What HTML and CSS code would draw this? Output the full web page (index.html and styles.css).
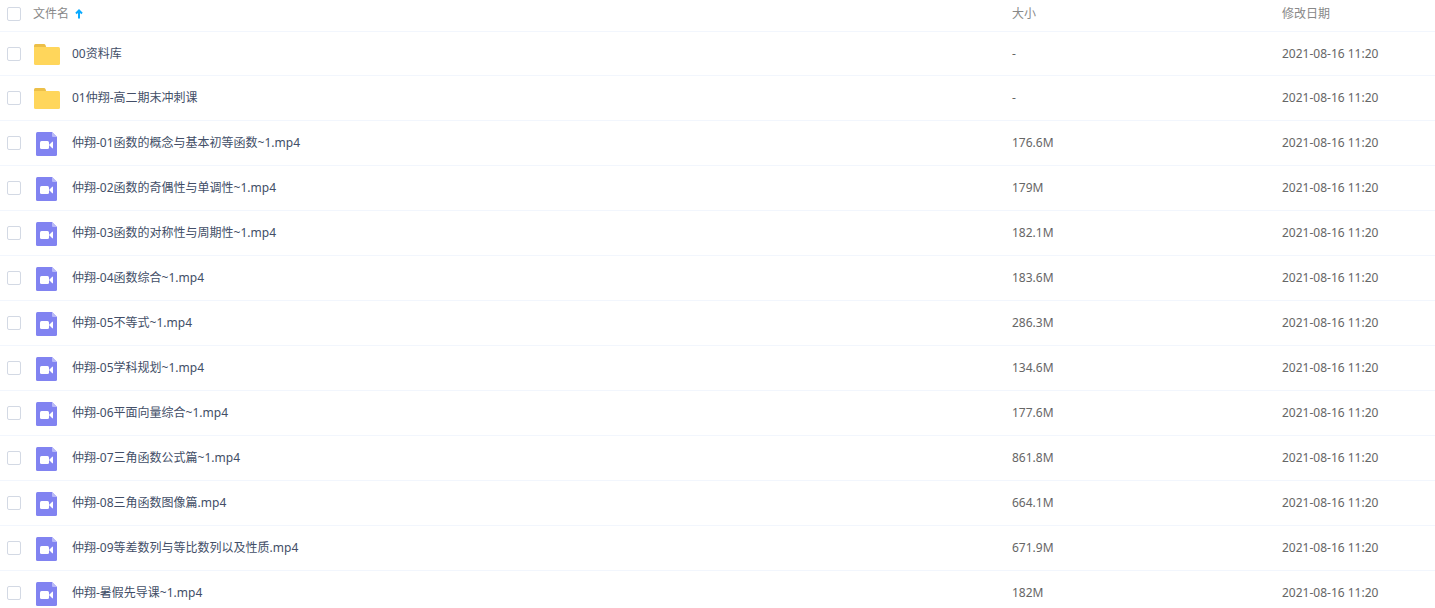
FILE: index.html
```html
<!doctype html>
<html lang="zh-CN">
  <head>
    <meta charset="utf-8">
    <meta name="viewport" content="width=device-width, initial-scale=1">
    <title>文件列表</title>
    <link rel="stylesheet" href="styles.css">
  </head>
  <body>
    <svg class="sprite" aria-hidden="true">
      <symbol id="folder" viewBox="0 0 26 26">
        <path fill="#ecbf48" d="M0 8V4.500Q0 3 1.500 3H10Q11 3 11.500 4L12.500 7V8z"/>
        <path fill="#ffd65b" d="M0 6H24.500Q26 6 26 7.500V22.500Q26 24 24.500 24H1.500Q0 24 0 22.500z"/>
      </symbol>
      <symbol id="video" viewBox="0 0 26 26">
        <path fill="#8183f1" d="M3.500 2H18L23 7V24.500Q23 26 21.500 26H3.500Q2 26 2 24.500V3.500Q2 2 3.500 2z"/>
        <path fill="#b9baf8" d="M18 2L23 7H19Q18 7 18 6z"/>
        <rect fill="#fff" x="6" y="11" width="9" height="8" rx="1.500"/>
        <path fill="#fff" d="M15.500 14.500L18 12Q19 11 19 12.500V17.500Q19 19 18 18L15.500 15.500z"/>
      </symbol>
    </svg>
    <table class="list">
      <thead>
        <tr>
          <th class="check"><input type="checkbox" aria-label="全选"></th>
          <th class="name">
            <button class="sort" type="button">文件名
              <svg class="arrow" viewBox="0 0 8 10" aria-hidden="true"><path d="M4 9.500V1.500M1 4.500L4 1.500L7 4.500"/></svg>
            </button>
          </th>
          <th class="size">大小</th>
          <th class="date">修改日期</th>
        </tr>
      </thead>
      <tbody>
        <tr>
          <td class="check"><input type="checkbox" aria-label="选择 00资料库"></td>
          <td class="name"><a class="file" href="#"><svg class="icon" aria-hidden="true"><use href="#folder"/></svg>00资料库</a></td>
          <td class="size">-</td>
          <td class="date">2021-08-16 11:20</td>
        </tr>
        <tr>
          <td class="check"><input type="checkbox" aria-label="选择 01仲翔-高二期末冲刺课"></td>
          <td class="name"><a class="file" href="#"><svg class="icon" aria-hidden="true"><use href="#folder"/></svg>01仲翔-高二期末冲刺课</a></td>
          <td class="size">-</td>
          <td class="date">2021-08-16 11:20</td>
        </tr>
        <tr>
          <td class="check"><input type="checkbox" aria-label="选择 仲翔-01函数的概念与基本初等函数~1.mp4"></td>
          <td class="name"><a class="file" href="#"><svg class="icon" aria-hidden="true"><use href="#video"/></svg>仲翔-01函数的概念与基本初等函数~1.mp4</a></td>
          <td class="size">176.6M</td>
          <td class="date">2021-08-16 11:20</td>
        </tr>
        <tr>
          <td class="check"><input type="checkbox" aria-label="选择 仲翔-02函数的奇偶性与单调性~1.mp4"></td>
          <td class="name"><a class="file" href="#"><svg class="icon" aria-hidden="true"><use href="#video"/></svg>仲翔-02函数的奇偶性与单调性~1.mp4</a></td>
          <td class="size">179M</td>
          <td class="date">2021-08-16 11:20</td>
        </tr>
        <tr>
          <td class="check"><input type="checkbox" aria-label="选择 仲翔-03函数的对称性与周期性~1.mp4"></td>
          <td class="name"><a class="file" href="#"><svg class="icon" aria-hidden="true"><use href="#video"/></svg>仲翔-03函数的对称性与周期性~1.mp4</a></td>
          <td class="size">182.1M</td>
          <td class="date">2021-08-16 11:20</td>
        </tr>
        <tr>
          <td class="check"><input type="checkbox" aria-label="选择 仲翔-04函数综合~1.mp4"></td>
          <td class="name"><a class="file" href="#"><svg class="icon" aria-hidden="true"><use href="#video"/></svg>仲翔-04函数综合~1.mp4</a></td>
          <td class="size">183.6M</td>
          <td class="date">2021-08-16 11:20</td>
        </tr>
        <tr>
          <td class="check"><input type="checkbox" aria-label="选择 仲翔-05不等式~1.mp4"></td>
          <td class="name"><a class="file" href="#"><svg class="icon" aria-hidden="true"><use href="#video"/></svg>仲翔-05不等式~1.mp4</a></td>
          <td class="size">286.3M</td>
          <td class="date">2021-08-16 11:20</td>
        </tr>
        <tr>
          <td class="check"><input type="checkbox" aria-label="选择 仲翔-05学科规划~1.mp4"></td>
          <td class="name"><a class="file" href="#"><svg class="icon" aria-hidden="true"><use href="#video"/></svg>仲翔-05学科规划~1.mp4</a></td>
          <td class="size">134.6M</td>
          <td class="date">2021-08-16 11:20</td>
        </tr>
        <tr>
          <td class="check"><input type="checkbox" aria-label="选择 仲翔-06平面向量综合~1.mp4"></td>
          <td class="name"><a class="file" href="#"><svg class="icon" aria-hidden="true"><use href="#video"/></svg>仲翔-06平面向量综合~1.mp4</a></td>
          <td class="size">177.6M</td>
          <td class="date">2021-08-16 11:20</td>
        </tr>
        <tr>
          <td class="check"><input type="checkbox" aria-label="选择 仲翔-07三角函数公式篇~1.mp4"></td>
          <td class="name"><a class="file" href="#"><svg class="icon" aria-hidden="true"><use href="#video"/></svg>仲翔-07三角函数公式篇~1.mp4</a></td>
          <td class="size">861.8M</td>
          <td class="date">2021-08-16 11:20</td>
        </tr>
        <tr>
          <td class="check"><input type="checkbox" aria-label="选择 仲翔-08三角函数图像篇.mp4"></td>
          <td class="name"><a class="file" href="#"><svg class="icon" aria-hidden="true"><use href="#video"/></svg>仲翔-08三角函数图像篇.mp4</a></td>
          <td class="size">664.1M</td>
          <td class="date">2021-08-16 11:20</td>
        </tr>
        <tr>
          <td class="check"><input type="checkbox" aria-label="选择 仲翔-09等差数列与等比数列以及性质.mp4"></td>
          <td class="name"><a class="file" href="#"><svg class="icon" aria-hidden="true"><use href="#video"/></svg>仲翔-09等差数列与等比数列以及性质.mp4</a></td>
          <td class="size">671.9M</td>
          <td class="date">2021-08-16 11:20</td>
        </tr>
        <tr>
          <td class="check"><input type="checkbox" aria-label="选择 仲翔-暑假先导课~1.mp4"></td>
          <td class="name"><a class="file" href="#"><svg class="icon" aria-hidden="true"><use href="#video"/></svg>仲翔-暑假先导课~1.mp4</a></td>
          <td class="size">182M</td>
          <td class="date">2021-08-16 11:20</td>
        </tr>
      </tbody>
    </table>
  </body>
</html>
```
FILE: styles.css
```css
* {
  box-sizing: border-box;
}
body {
  margin: 0;
  background: #fff;
  color: #666;
  font: 12px/18px "Noto Sans", "Noto Sans CJK SC", sans-serif;
}
.sprite {
  display: none;
}
.list {
  width: 100%;
  table-layout: fixed;
  border-collapse: separate;
  border-spacing: 0;
}
th, td {
  padding: 0;
  text-align: left;
  vertical-align: middle;
}
th {
  height: 31px;
  padding-bottom: 4px;
  color: #888;
  font-weight: normal;
}
td {
  height: 45px;
  border-bottom: 1px solid #f2f6fd;
}
tbody tr:first-child td {
  border-top: 1px solid #f2f6fd;
}
.check {
  width: 33px;
  padding-left: 7px;
}
.size {
  width: 270px;
}
.date {
  width: 153px;
}
input {
  display: block;
  width: 14px;
  height: 14px;
  margin: 0;
  border: 1px solid #d3d9e4;
  border-radius: 2px;
  background: #fff;
  -webkit-appearance: none;
  appearance: none;
}
input:checked {
  border-color: #09aaff;
  background: #09aaff;
}
.sort {
  display: flex;
  align-items: center;
  gap: 6px;
  padding: 0;
  border: 0;
  background: none;
  color: inherit;
  font: inherit;
  cursor: pointer;
}
.arrow {
  width: 8px;
  height: 10px;
  fill: none;
  stroke: #09aaff;
  stroke-width: 2;
}
.file {
  display: flex;
  align-items: center;
  gap: 12px;
  padding-left: 1px;
  color: #424e67;
  text-decoration: none;
}
.file:hover {
  color: #09aaff;
}
.icon {
  flex: none;
  width: 26px;
  height: 26px;
}
```
